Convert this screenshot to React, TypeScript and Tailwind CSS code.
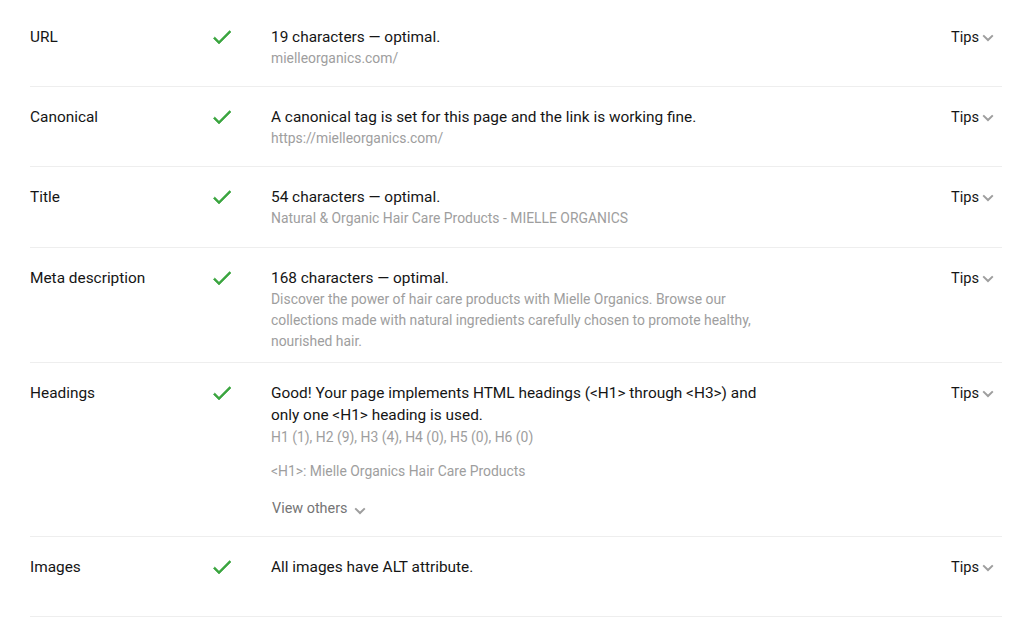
import type { ReactNode } from "react";

type AuditRow = {
	label: string;
	summary: ReactNode;
	details?: ReactNode;
	rowClassName?: string;
};

function CheckIcon() {
	return (
		<svg viewBox="0 0 24 24" className="size-6 fill-[#3aa53f] stroke-[#3aa53f] stroke-[0.6]">
			<path d="M9 16.2L4.8 12l-1.4 1.4L9 19 21 7l-1.4-1.4L9 16.2z" />
		</svg>
	);
}

function ChevronDown() {
	return (
		<svg
			viewBox="0 0 12 8"
			className="h-[8px] w-[12px] fill-none stroke-[#9e9e9e] stroke-[2]"
		>
			<path d="M1.2 1.4 6 6l4.8-4.6" />
		</svg>
	);
}

const rows: AuditRow[] = [
	{
		label: "URL",
		summary: "19 characters — optimal.",
		details: <p>mielleorganics.com/</p>,
	},
	{
		label: "Canonical",
		summary: "A canonical tag is set for this page and the link is working fine.",
		details: <p>https://mielleorganics.com/</p>,
	},
	{
		label: "Title",
		summary: "54 characters — optimal.",
		details: <p>Natural &amp; Organic Hair Care Products - MIELLE ORGANICS</p>,
		rowClassName: "min-h-[81px]",
	},
	{
		label: "Meta description",
		summary: "168 characters — optimal.",
		details: (
			<p>
				Discover the power of hair care products with Mielle Organics. Browse our
				collections made with natural ingredients carefully chosen to promote
				healthy, nourished hair.
			</p>
		),
	},
	{
		label: "Headings",
		summary:
			"Good! Your page implements HTML headings (<H1> through <H3>) and only one <H1> heading is used.",
		details: (
			<>
				<p className="mt-px">H1 (1), H2 (9), H3 (4), H4 (0), H5 (0), H6 (0)</p>
				<p className="mt-[13px]">&lt;H1&gt;: Mielle Organics Hair Care Products</p>
				<button className="mt-[12px] flex items-center gap-[7px] py-[4px] pl-px text-[14.4px] leading-[22px] text-[#757575]">
					View others
					<span className="mt-[3px]">
						<ChevronDown />
					</span>
				</button>
			</>
		),
		rowClassName: "pb-[12px]",
	},
	{
		label: "Images",
		summary: "All images have ALT attribute.",
	},
];

export default function App() {
	return (
		<div className="min-h-[624px] bg-white pt-[7px] pl-[30px] pr-[22px] font-['Roboto','Liberation_Sans',sans-serif] text-[#151515]">
			{rows.map((row) => (
				<div
					key={row.label}
					className={`flex min-h-[80px] items-start border-b border-[#eeeeee] pt-[19px] pb-[10px] ${row.rowClassName ?? ""}`}
				>
					<p className="w-[180px] shrink-0 text-[15.4px] leading-[22px]">
						{row.label}
					</p>
					<div className="-mt-px w-[61px] shrink-0">
						<CheckIcon />
					</div>
					<div className="w-[490px] shrink-0">
						<p className="text-[15.4px] leading-[22px]">{row.summary}</p>
						{row.details ? (
							<div className="text-[13.9px] leading-[21px] text-[#9e9e9e]">
								{row.details}
							</div>
						) : null}
					</div>
					<div className="ml-auto flex items-center gap-[3px] pr-[8px]">
						<span className="text-[14.6px] leading-[22px]">Tips</span>
						<span className="mt-[2px]">
							<ChevronDown />
						</span>
					</div>
				</div>
			))}
		</div>
	);
}
